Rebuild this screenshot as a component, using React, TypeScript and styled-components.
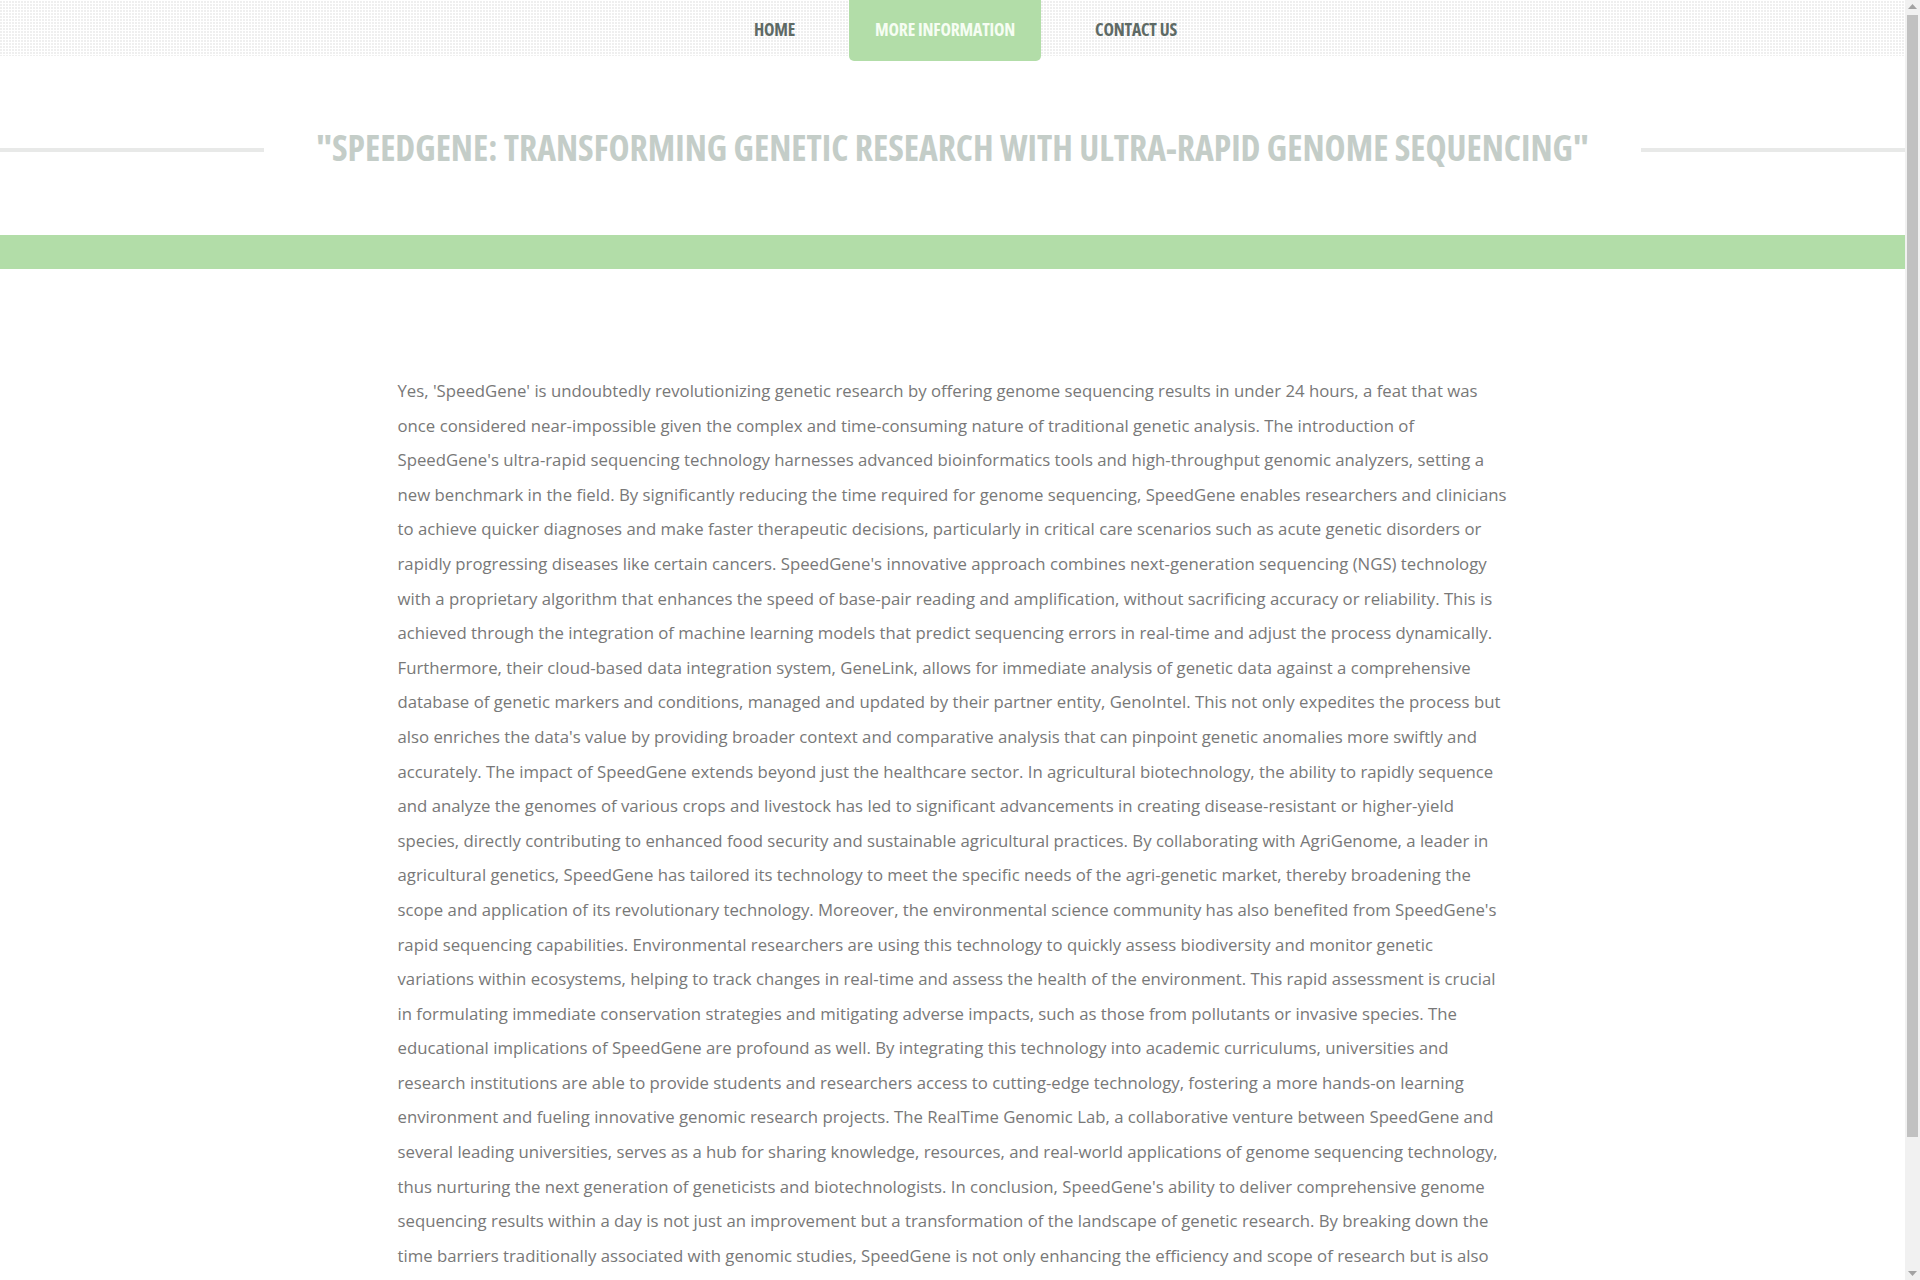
import * as React from 'react';
import styled, { createGlobalStyle } from 'styled-components';

const GlobalStyle = createGlobalStyle`
  html, body {
    margin: 0;
    padding: 0;
    background: #ffffff;
  }
  body {
    font-family: 'Open Sans', 'Liberation Sans', sans-serif;
  }
`;

const navItems = ['Home', 'More information', 'Contact us'];
const activeIndex = 1;

const bodyText =
  "Yes, 'SpeedGene' is undoubtedly revolutionizing genetic research by offering genome sequencing results in under 24 hours, a feat that was once considered near-impossible given the complex and time-consuming nature of traditional genetic analysis. The introduction of SpeedGene's ultra-rapid sequencing technology harnesses advanced bioinformatics tools and high-throughput genomic analyzers, setting a new benchmark in the field. By significantly reducing the time required for genome sequencing, SpeedGene enables researchers and clinicians to achieve quicker diagnoses and make faster therapeutic decisions, particularly in critical care scenarios such as acute genetic disorders or rapidly progressing diseases like certain cancers. SpeedGene's innovative approach combines next-generation sequencing (NGS) technology with a proprietary algorithm that enhances the speed of base-pair reading and amplification, without sacrificing accuracy or reliability. This is achieved through the integration of machine learning models that predict sequencing errors in real-time and adjust the process dynamically. Furthermore, their cloud-based data integration system, GeneLink, allows for immediate analysis of genetic data against a comprehensive database of genetic markers and conditions, managed and updated by their partner entity, GenoIntel. This not only expedites the process but also enriches the data's value by providing broader context and comparative analysis that can pinpoint genetic anomalies more swiftly and accurately. The impact of SpeedGene extends beyond just the healthcare sector. In agricultural biotechnology, the ability to rapidly sequence and analyze the genomes of various crops and livestock has led to significant advancements in creating disease-resistant or higher-yield species, directly contributing to enhanced food security and sustainable agricultural practices. By collaborating with AgriGenome, a leader in agricultural genetics, SpeedGene has tailored its technology to meet the specific needs of the agri-genetic market, thereby broadening the scope and application of its revolutionary technology. Moreover, the environmental science community has also benefited from SpeedGene's rapid sequencing capabilities. Environmental researchers are using this technology to quickly assess biodiversity and monitor genetic variations within ecosystems, helping to track changes in real-time and assess the health of the environment. This rapid assessment is crucial in formulating immediate conservation strategies and mitigating adverse impacts, such as those from pollutants or invasive species. The educational implications of SpeedGene are profound as well. By integrating this technology into academic curriculums, universities and research institutions are able to provide students and researchers access to cutting-edge technology, fostering a more hands-on learning environment and fueling innovative genomic research projects. The RealTime Genomic Lab, a collaborative venture between SpeedGene and several leading universities, serves as a hub for sharing knowledge, resources, and real-world applications of genome sequencing technology, thus nurturing the next generation of geneticists and biotechnologists. In conclusion, SpeedGene's ability to deliver comprehensive genome sequencing results within a day is not just an improvement but a transformation of the landscape of genetic research. By breaking down the time barriers traditionally associated with genomic studies, SpeedGene is not only enhancing the efficiency and scope of research but is also paving the way for a future where genetic insights are accessible to all.";

// leaves room for the browser scrollbar drawn at the right
const Page = styled.div`
  margin-right: 15px;
`;

const ScrollTrack = styled.div`
  position: fixed;
  top: 0;
  right: 0;
  width: 15px;
  height: 100vh;
  background: #f1f1f1;
  display: flex;
  flex-direction: column;
  align-items: center;
  justify-content: space-between;
  padding: 4px 0;
  box-sizing: border-box;
`;

const ScrollThumb = styled.div`
  width: 11px;
  height: 1122px;
  margin-top: 6px;
  background: #c1c1c1;
  align-self: center;
`;

const ScrollSpacer = styled.div`
  flex: 1;
`;

const NavBar = styled.nav`
  height: 56px;
  background-color: #efefef;
  background-image: linear-gradient(90deg, transparent 2px, #ffffff 2px),
    linear-gradient(0deg, transparent 2px, #ffffff 2px);
  background-size: 3px 3px;
  display: flex;
  justify-content: center;
  align-items: flex-start;
`;

const NavList = styled.ul`
  list-style: none;
  margin: 0;
  padding: 0 0 0 26px;
  display: flex;
  gap: 28px;
`;

const NavLink = styled.a<{ $active: boolean }>`
  display: block;
  height: ${(p) => (p.$active ? '61px' : '56px')};
  line-height: 58px;
  padding: 0 26px;
  font-family: 'Open Sans', 'Liberation Sans Narrow', sans-serif;
  font-stretch: 75%;
  font-weight: 700;
  font-size: 17.7px;
  letter-spacing: -0.2px;
  text-transform: uppercase;
  text-decoration: none;
  color: ${(p) => (p.$active ? '#f6fdf3' : '#5e6a65')};
  background: ${(p) => (p.$active ? '#b2dda8' : 'transparent')};
  border-radius: 0 0 5px 5px;
  box-sizing: border-box;
  cursor: pointer;
`;

const TitleSection = styled.header`
  padding: 66px 0 63px;
  display: flex;
  align-items: center;
`;

const Rule = styled.div`
  flex: 1;
  height: 4px;
  margin-top: 6px;
  background: #e8e9e8;
`;

const Title = styled.h1`
  margin: 0 52px;
  font-family: 'Open Sans', 'Liberation Sans Narrow', sans-serif;
  font-stretch: 75%;
  font-weight: 700;
  font-size: 35.6px;
  line-height: 50px;
  text-transform: uppercase;
  color: #c4cdc8;
  white-space: nowrap;
`;

const Band = styled.div`
  height: 34px;
  background: #b2dda8;
`;

const Content = styled.main`
  width: 1110px;
  margin: 0 auto;
  padding: 105px 0 90px;
`;

const Paragraph = styled.p`
  margin: 0;
  font-family: 'Open Sans', 'Liberation Sans', sans-serif;
  font-size: 16.75px;
  line-height: 34.6px;
  color: #787878;
`;

function Arrow({ down }: { down?: boolean }) {
  return (
    <svg width="9" height="5" viewBox="0 0 9 5">
      <path d={down ? 'M0 0h9L4.5 5z' : 'M0 5h9L4.5 0z'} fill="#a3a3a3" />
    </svg>
  );
}

export default function App() {
  return (
    <>
      <GlobalStyle />
      <Page>
        <NavBar>
          <NavList>
            {navItems.map((item, i) => (
              <li key={item}>
                <NavLink $active={i === activeIndex}>{item}</NavLink>
              </li>
            ))}
          </NavList>
        </NavBar>
        <TitleSection>
          <Rule />
          <Title>"SpeedGene: Transforming Genetic Research with Ultra-Rapid Genome Sequencing"</Title>
          <Rule />
        </TitleSection>
        <Band />
        <Content>
          <Paragraph>{bodyText}</Paragraph>
        </Content>
      </Page>
      <ScrollTrack>
        <Arrow />
        <ScrollThumb />
        <ScrollSpacer />
        <Arrow down />
      </ScrollTrack>
    </>
  );
}
